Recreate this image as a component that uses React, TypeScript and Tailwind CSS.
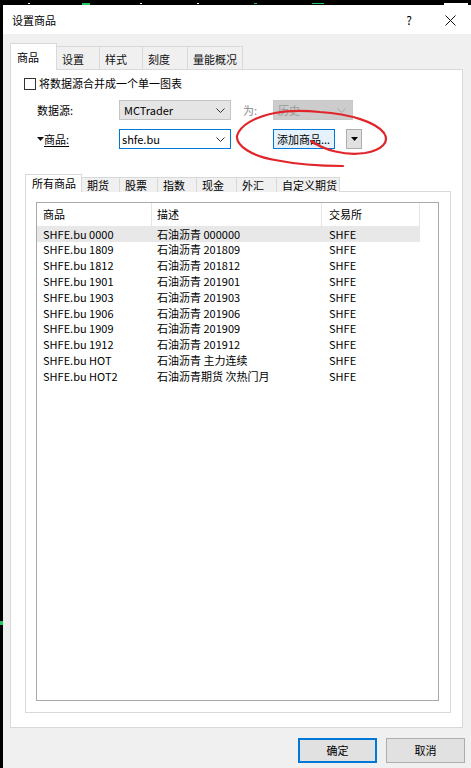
import React from 'react'

const rows = [
  ['SHFE.bu 0000', '石油沥青 000000', 'SHFE'],
  ['SHFE.bu 1809', '石油沥青 201809', 'SHFE'],
  ['SHFE.bu 1812', '石油沥青 201812', 'SHFE'],
  ['SHFE.bu 1901', '石油沥青 201901', 'SHFE'],
  ['SHFE.bu 1903', '石油沥青 201903', 'SHFE'],
  ['SHFE.bu 1906', '石油沥青 201906', 'SHFE'],
  ['SHFE.bu 1909', '石油沥青 201909', 'SHFE'],
  ['SHFE.bu 1912', '石油沥青 201912', 'SHFE'],
  ['SHFE.bu HOT', '石油沥青 主力连续', 'SHFE'],
  ['SHFE.bu HOT2', '石油沥青期货 次热门月', 'SHFE'],
]

const outerTabs = [
  { label: '设置', w: 'w-[43px]' },
  { label: '样式', w: 'w-[43px]' },
  { label: '刻度', w: 'w-[45px]' },
  { label: '量能概况', w: 'w-[55px]' },
]

const innerTabs = [
  { label: '期货', w: 'w-[38px]' },
  { label: '股票', w: 'w-[38px]' },
  { label: '指数', w: 'w-[39px]' },
  { label: '现金', w: 'w-[40px]' },
  { label: '外汇', w: 'w-[40px]' },
  { label: '自定义期货', w: 'w-[63px]' },
]

const Chevron = ({ color = '#333' }: { color?: string }) => (
  <svg width="9" height="5" viewBox="0 0 9 5" fill="none">
    <path d="M0.5 0.5 L4.5 4.5 L8.5 0.5" stroke={color} strokeWidth="1" />
  </svg>
)

const App = () => {
  return (
    <div className="relative w-[471px] h-[768px] overflow-hidden bg-black flex flex-col font-['Noto_Sans_CJK_SC',sans-serif] text-[11px] text-black">
      {/* chart strip behind the dialog */}
      <div className="h-[5px] flex items-start">
        <span className="ml-[28px] mt-[3px] w-[2px] h-[1px] bg-white" />
        <span className="ml-[52px] mt-[3px] w-[8px] h-[2px] bg-[#22c55e]" />
        <span className="ml-[50px] mt-[3px] w-[2px] h-[1px] bg-white" />
        <span className="ml-[55px] mt-[3px] w-[2px] h-[1px] bg-white" />
        <span className="ml-[55px] mt-[3px] w-[3px] h-[1px] bg-[#22c55e]" />
        <span className="ml-[55px] mt-[3px] w-[12px] h-[1px] bg-[#22c55e]" />
        <span className="ml-[120px] mt-[3px] w-[24px] h-[2px] bg-white" />
      </div>

      <div className="flex flex-1">
        <div className="w-[3px] relative">
          <span className="absolute left-0 top-[616px] w-[3px] h-[4px] bg-[#22c55e]" />
        </div>

        <div className="flex-1 flex flex-col bg-[#f0f0f0]">
          {/* title bar */}
          <div className="h-[29px] bg-white flex items-center pl-[9px] pt-px">
            <span className="text-[11px]">设置商品</span>
            <span className="ml-auto text-[12px] mr-[33px]">?</span>
            <svg width="11" height="11" viewBox="0 0 11 11" className="mr-[15px]">
              <path d="M0.5 0.5 L10.5 10.5 M10.5 0.5 L0.5 10.5" stroke="#111" strokeWidth="1" />
            </svg>
          </div>

          <div className="pt-[9px] pl-[7px] pr-[8px]">
            {/* outer tabs */}
            <div className="h-[27px] flex items-end -mb-px relative">
              <div className="w-[47px] h-[27px] bg-white border border-b-0 border-[#d9d9d9] pl-[6px] pt-[5px] relative z-10">
                商品
              </div>
              {outerTabs.map((t) => (
                <div
                  key={t.label}
                  className={`${t.w} h-[24px] border border-l-0 border-b-0 border-[#d9d9d9] pl-[5px] pt-[4px] text-[#111]`}
                >
                  {t.label}
                </div>
              ))}
            </div>

            {/* outer panel */}
            <div className="h-[659px] bg-white border border-[#d9d9d9] flex flex-col">
              <div className="pt-[7px] pl-[13px] flex items-center h-[20px]">
                <div className="w-[12px] h-[12px] border border-[#333] bg-white" />
                <span className="ml-[3px]">将数据源合并成一个单一图表</span>
              </div>

              <div className="mt-[10px] h-[20px] flex items-center pl-[26px]">
                <span className="w-[82px]">数据源:</span>
                <div className="w-[112px] h-[20px] bg-[#e5e5e5] border border-[#c4c4c4] flex items-center pl-[4px] pr-[5px]">
                  <span>MCTrader</span>
                  <span className="ml-auto">
                    <Chevron />
                  </span>
                </div>
                <span className="ml-[12px] text-[#8a8a8a] w-[30px]">为:</span>
                <div className="w-[80px] h-[20px] bg-[#cccccc] border border-[#c8c8c8] flex items-center pl-[4px] pr-[6px] text-[#9a9a9a]">
                  <span>历史</span>
                  <span className="ml-auto">
                    <Chevron color="#a8a8a8" />
                  </span>
                </div>
              </div>

              <div className="mt-[9px] h-[20px] flex items-center pl-[26px]">
                <span className="w-[82px] flex items-center">
                  <svg width="7" height="4" viewBox="0 0 7 4">
                    <path d="M0 0 L7 0 L3.5 4 Z" fill="#111" />
                  </svg>
                  <span className="underline underline-offset-2">商品:</span>
                </span>
                <div className="w-[112px] h-[20px] bg-white border border-[#0078d7] flex items-center pl-[2px] pr-[5px]">
                  <span>shfe.bu</span>
                  <span className="ml-auto">
                    <Chevron />
                  </span>
                </div>
                <div className="ml-[42px] w-[62px] h-[20px] bg-[#e5f1fb] border border-[#0078d7] flex items-center pl-[3px]">
                  添加商品...
                </div>
                <div className="ml-[11px] w-[16px] h-[20px] bg-[#e1e1e1] border border-[#adadad] flex items-center justify-center">
                  <svg width="7" height="4" viewBox="0 0 7 4">
                    <path d="M0 0 L7 0 L3.5 4 Z" fill="#000" />
                  </svg>
                </div>
              </div>

              {/* inner tabs */}
              <div className="mt-[25px] ml-[14px] mr-[11px] flex flex-col">
                <div className="h-[18px] flex items-end -mb-px relative">
                  <div className="w-[57px] h-[18px] bg-white border border-b-0 border-[#d9d9d9] pl-[6px] flex items-center relative z-10">
                    所有商品
                  </div>
                  {innerTabs.map((t) => (
                    <div
                      key={t.label}
                      className={`${t.w} h-[15px] bg-[#f0f0f0] border border-l-0 border-b-0 border-[#d9d9d9] pl-[5px] flex items-center`}
                    >
                      {t.label}
                    </div>
                  ))}
                </div>

                <div className="h-[522px] border border-[#d9d9d9] bg-white pt-[10px] pl-[10px] pr-[11px] pb-[11px]">
                  <div className="h-full border border-[#a9a9a9] bg-white">
                    <div className="h-[23px] flex">
                      <div className="w-[115px] border-r border-[#e5e5e5] pl-[6px] flex items-center">商品</div>
                      <div className="w-[170px] border-r border-[#e5e5e5] pl-[5px] flex items-center">描述</div>
                      <div className="w-[98px] border-r border-[#e5e5e5] pl-[7px] flex items-center">交易所</div>
                    </div>
                    {rows.map((r, i) => (
                      <div
                        key={r[0]}
                        className={`h-[15.8px] w-[383px] flex items-center ${i === 0 ? 'bg-[#e8e8e8]' : ''}`}
                      >
                        <span className="w-[115px] pl-[6px]">{r[0]}</span>
                        <span className="w-[170px] pl-[5px]">{r[1]}</span>
                        <span className="w-[98px] pl-[7px]">{r[2]}</span>
                      </div>
                    ))}
                  </div>
                </div>
              </div>
            </div>
          </div>

          {/* dialog buttons */}
          <div className="mt-[10px] flex justify-end gap-[9px] pr-[6px]">
            <div className="w-[79px] h-[25px] border-2 border-[#0078d7] bg-[#e1e1e1] flex items-center justify-center">
              确定
            </div>
            <div className="w-[79px] h-[25px] border border-[#adadad] bg-[#e1e1e1] flex items-center justify-center">
              取消
            </div>
          </div>
        </div>
      </div>

      {/* red marker circle drawn over the dialog */}
      <svg className="absolute left-0 top-0 pointer-events-none" width="471" height="768" viewBox="0 0 471 768" fill="none">
        <path
          d="M311 141 C324 150 345 156 365 153 C382 150 390 142 384 133 C376 122 350 114 320 112 C300 110 285 111 275 113 C255 117 240 125 237 136 C236 146 252 156 275 160 C295 164 320 166 343 166"
          stroke="#e0262b"
          strokeWidth="2.2"
          strokeLinecap="round"
        />
      </svg>
    </div>
  )
}

export default App
